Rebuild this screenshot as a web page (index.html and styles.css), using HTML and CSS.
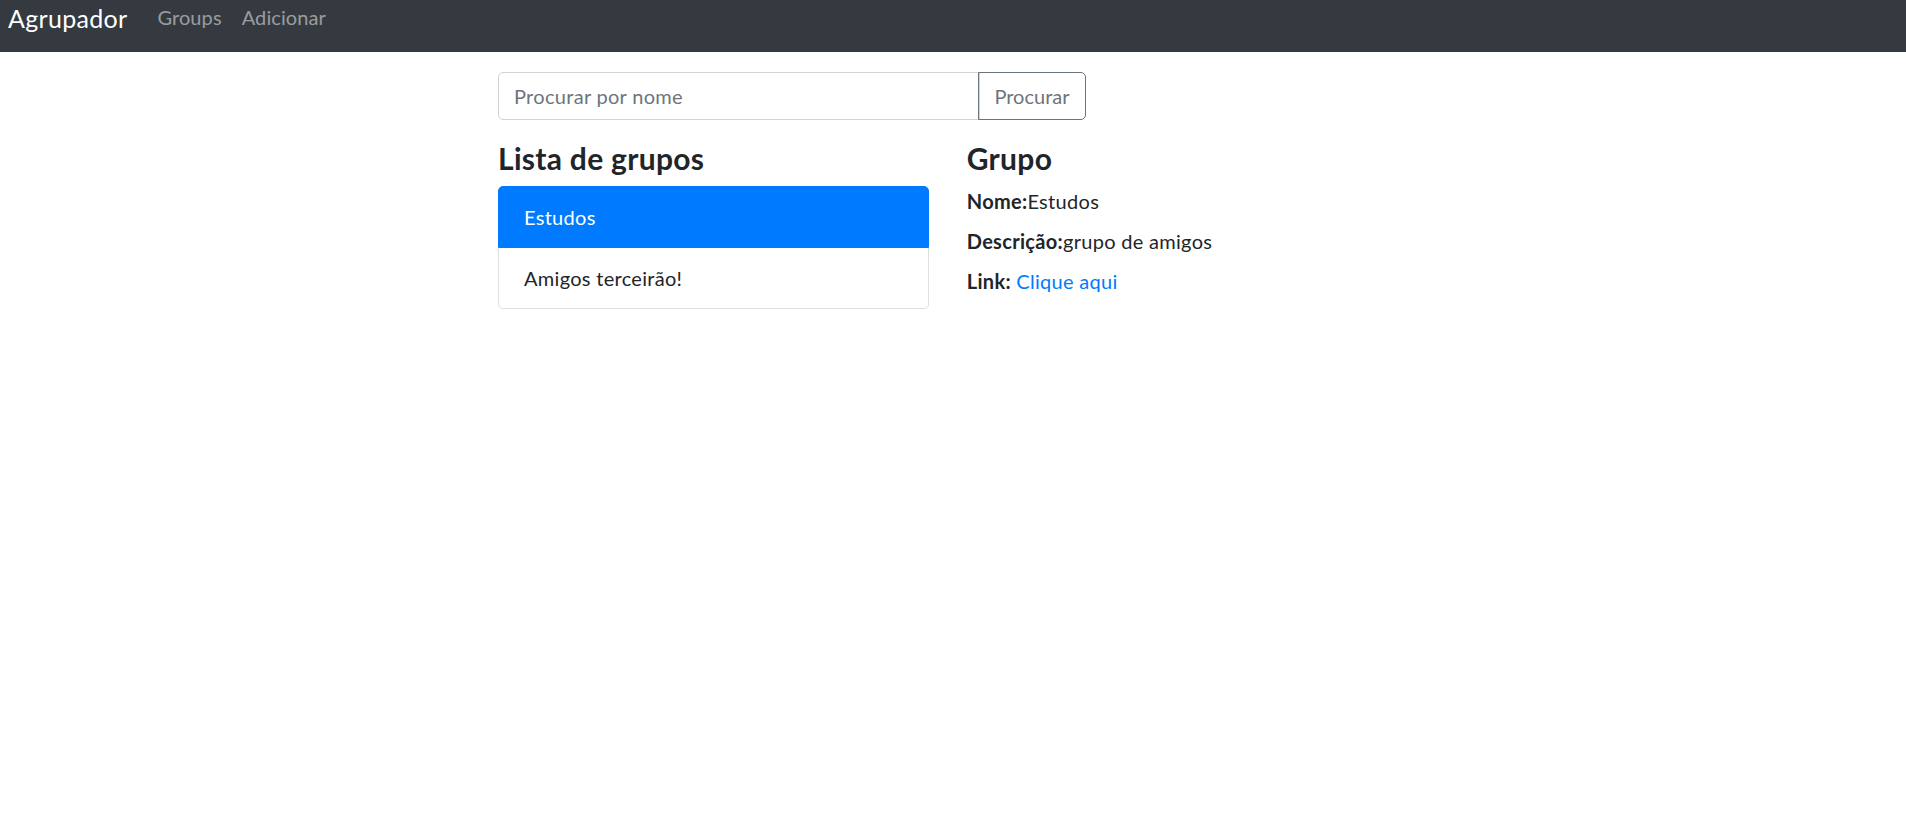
FILE: index.html
```html
<!DOCTYPE html>
<html lang="pt-BR">
<head>
<meta charset="utf-8">
<title>Agrupador</title>
<link rel="stylesheet" href="styles.css">
</head>
<body>
<nav class="navbar">
  <a class="brand" href="#">Agrupador</a>
  <div class="nav-links">
    <a class="nav-link" href="#">Groups</a>
    <a class="nav-link" href="#">Adicionar</a>
  </div>
</nav>
<main class="list">
  <div class="search-col">
    <div class="input-group">
      <input class="form-control" type="text" placeholder="Procurar por nome">
      <button class="btn-outline" type="button">Procurar</button>
    </div>
  </div>
  <div class="row">
    <section class="col">
      <h4 class="title">Lista de grupos</h4>
      <ul class="list-group">
        <li class="list-item active">Estudos</li>
        <li class="list-item">Amigos terceirão!</li>
      </ul>
    </section>
    <section class="col">
      <h4 class="title">Grupo</h4>
      <div class="field"><label class="label"><strong>Nome:</strong></label>Estudos</div>
      <div class="field"><label class="label"><strong>Descrição:</strong></label>grupo de amigos</div>
      <div class="field"><label class="label"><strong>Link:</strong></label> <a class="link" href="#">Clique aqui</a></div>
    </section>
  </div>
</main>
</body>
</html>
```
FILE: styles.css
```css
* { box-sizing: border-box; }

html, body {
  margin: 0;
  padding: 0;
  background: #fff;
}

body {
  font-family: "Lato", "Liberation Sans", sans-serif;
  font-size: 20px;
  line-height: 1.5;
  letter-spacing: 0.015em;
  color: #212529;
}

.navbar {
  display: flex;
  align-items: flex-start;
  height: 52px;
  background: #343a40;
  padding: 0 0 0 8px;
}

.brand {
  font-size: 25px;
  line-height: 30px;
  padding-top: 3px;
  color: #fff;
  text-decoration: none;
  margin-right: 20px;
}

.nav-links {
  display: flex;
  padding-top: 5px;
}

.nav-link {
  display: block;
  padding: 0 10px;
  line-height: 24px;
  font-size: 20px;
  letter-spacing: 0.005em;
  color: rgba(255, 255, 255, 0.5);
  text-decoration: none;
}

.list {
  width: 937.5px;
  margin: 20px 0 0 calc(50% - 473.75px);
}

.search-col {
  width: 625px;
  padding: 0 18.75px;
}

.input-group {
  display: flex;
  margin-bottom: 20px;
}

.form-control {
  flex: 1 1 auto;
  min-width: 0;
  height: 47.5px;
  padding: 7.5px 15px;
  font-family: inherit;
  font-size: 20px;
  line-height: 30px;
  letter-spacing: inherit;
  color: #495057;
  border: 1.25px solid #ced4da;
  border-radius: 5px 0 0 5px;
  outline: none;
}

.form-control::placeholder {
  color: #6c757d;
  opacity: 1;
}

.btn-outline {
  height: 47.5px;
  margin-left: -1.25px;
  padding: 7.5px 15px;
  font-family: inherit;
  font-size: 20px;
  line-height: 30px;
  letter-spacing: 0;
  color: #6c757d;
  background: transparent;
  border: 1.25px solid #6c757d;
  border-radius: 0 5px 5px 0;
}

.row {
  display: grid;
  grid-template-columns: 468.75px 468.75px;
}

.col {
  padding: 0 18.75px;
}

.title {
  margin: 0 0 10px;
  font-size: 30px;
  line-height: 36px;
  font-weight: 700;
  color: #212529;
}

.list-group {
  list-style: none;
  margin: 0;
  padding: 0;
}

.list-item {
  padding: 15px 25px;
  line-height: 30px;
  border: 1.25px solid rgba(0, 0, 0, 0.125);
  background: #fff;
}

.list-item + .list-item {
  border-top-width: 0;
}

.list-item:first-child {
  border-radius: 5px 5px 0 0;
}

.list-item:last-child {
  border-radius: 0 0 5px 5px;
}

.list-item.active {
  background: #007bff;
  border-color: #007bff;
  color: #fff;
}

.field {
  line-height: 30px;
}

.label {
  display: inline-block;
  margin-bottom: 10px;
}

.label strong {
  font-weight: 700;
}

.link {
  color: #007bff;
  text-decoration: none;
}
```
